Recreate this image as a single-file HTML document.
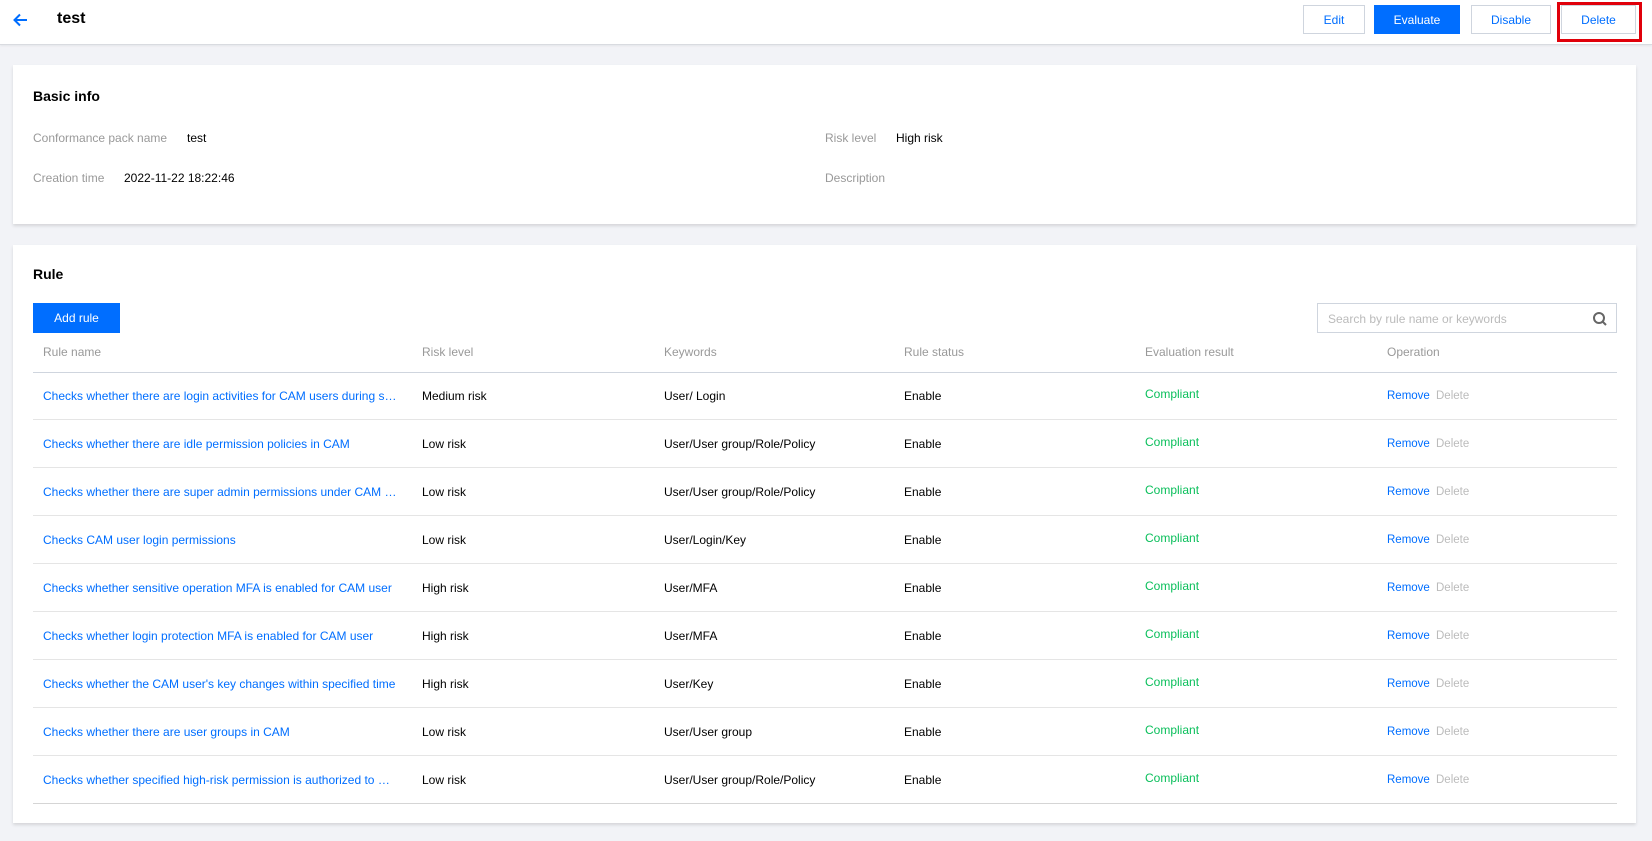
<!DOCTYPE html>
<html><head><meta charset="utf-8"><style>
*{box-sizing:border-box;margin:0;padding:0}
body{width:1652px;height:841px;background:#f2f3f7;font-family:"Liberation Sans",Arial,sans-serif;font-size:12px;color:#000;position:relative;overflow:hidden}
.hdr{position:absolute;left:0;top:0;width:1652px;height:45px;background:#fff;border-bottom:1px solid #d9dbe0;box-shadow:0 1px 2px rgba(0,0,0,.06)}
.abs{position:absolute}
.btn{position:absolute;top:5px;height:29px;border:1px solid #cfd5de;background:#fff;color:#006eff;font-size:12px;display:flex;align-items:center;justify-content:center}
.card{position:absolute;left:13px;width:1623px;background:#fff;box-shadow:0 2px 3px rgba(0,0,0,.12)}
.lbl{color:#999}
.row{position:absolute;left:33px;width:1584px;border-bottom:1px solid #e5e5e5;height:48px}
.row span{position:absolute;top:17px;white-space:nowrap}
.row span.blue:first-child{max-width:355px;overflow:hidden;text-overflow:ellipsis}
.blue{color:#006eff}.green{color:#0abf5b}.gray{color:#bbb}
.op{font-size:11.5px}
</style></head><body>
<div class="hdr">
<svg class="abs" style="left:12px;top:11px" width="18" height="18" viewBox="0 0 18 18"><path d="M15 9H3M8 3.5L2.5 9 8 14.5" fill="none" stroke="#006eff" stroke-width="2"/></svg>
<div class="abs" style="left:57px;top:10px;font-size:16px;font-weight:bold">test</div>
<div class="btn" style="left:1303px;width:62px">Edit</div>
<div class="btn" style="left:1374px;width:86px;background:#006eff;border-color:#006eff;color:#fff">Evaluate</div>
<div class="btn" style="left:1471px;width:80px">Disable</div>
<div class="btn" style="left:1561px;width:75px">Delete</div>
<div class="abs" style="left:1557px;top:2px;width:85px;height:40px;border:3px solid #e0000a"></div>
</div>

<div class="card" style="top:65px;height:159px">
<div class="abs" style="left:20px;top:23px;font-size:14px;font-weight:bold">Basic info</div>
<div class="abs lbl" style="left:20px;top:66px">Conformance pack name</div>
<div class="abs" style="left:174px;top:66px">test</div>
<div class="abs lbl" style="left:812px;top:66px">Risk level</div>
<div class="abs" style="left:883px;top:66px">High risk</div>
<div class="abs lbl" style="left:20px;top:106px">Creation time</div>
<div class="abs" style="left:111px;top:106px">2022-11-22 18:22:46</div>
<div class="abs lbl" style="left:812px;top:106px">Description</div>
</div>

<div class="card" style="top:245px;height:578px"></div>
<div class="abs" style="left:33px;top:266px;font-size:14px;font-weight:bold">Rule</div>
<div class="abs" style="left:33px;top:303px;width:87px;height:30px;background:#006eff;color:#fff;display:flex;align-items:center;justify-content:center;font-size:12px">Add rule</div>
<div class="abs" style="left:1317px;top:303px;width:300px;height:30px;border:1px solid #cfd5de"><span class="abs" style="left:10px;top:8px;color:#bbb;font-size:12px">Search by rule name or keywords</span>
<svg class="abs" style="left:274px;top:7px" width="16" height="16" viewBox="0 0 16 16"><circle cx="7" cy="7" r="5" fill="none" stroke="#666" stroke-width="2"/><path d="M10.5 10.5L14 14" stroke="#666" stroke-width="2"/></svg></div>

<div class="row" style="top:325px;border-bottom-color:#cfd5de">
<span class="lbl" style="left:10px;top:20px">Rule name</span><span class="lbl" style="left:389px;top:20px">Risk level</span><span class="lbl" style="left:631px;top:20px">Keywords</span><span class="lbl" style="left:871px;top:20px">Rule status</span><span class="lbl" style="left:1112px;top:20px">Evaluation result</span><span class="lbl" style="left:1354px;top:20px">Operation</span>
</div>

<div class="row" style="top:372px"><span class="blue" style="left:10px">Checks whether there are login activities for CAM users during specified time</span><span style="left:389px">Medium risk</span><span style="left:631px">User/ Login</span><span style="left:871px">Enable</span><span class="green" style="left:1112px;top:15px">Compliant</span><span class="blue op" style="left:1354px;top:18px">Remove</span><span class="gray op" style="left:1403px;top:18px">Delete</span></div>
<div class="row" style="top:420px"><span class="blue" style="left:10px">Checks whether there are idle permission policies in CAM</span><span style="left:389px">Low risk</span><span style="left:631px">User/User group/Role/Policy</span><span style="left:871px">Enable</span><span class="green" style="left:1112px;top:15px">Compliant</span><span class="blue op" style="left:1354px;top:18px">Remove</span><span class="gray op" style="left:1403px;top:18px">Delete</span></div>
<div class="row" style="top:468px"><span class="blue" style="left:10px">Checks whether there are super admin permissions under CAM sub-accounts</span><span style="left:389px">Low risk</span><span style="left:631px">User/User group/Role/Policy</span><span style="left:871px">Enable</span><span class="green" style="left:1112px;top:15px">Compliant</span><span class="blue op" style="left:1354px;top:18px">Remove</span><span class="gray op" style="left:1403px;top:18px">Delete</span></div>
<div class="row" style="top:516px"><span class="blue" style="left:10px">Checks CAM user login permissions</span><span style="left:389px">Low risk</span><span style="left:631px">User/Login/Key</span><span style="left:871px">Enable</span><span class="green" style="left:1112px;top:15px">Compliant</span><span class="blue op" style="left:1354px;top:18px">Remove</span><span class="gray op" style="left:1403px;top:18px">Delete</span></div>
<div class="row" style="top:564px"><span class="blue" style="left:10px">Checks whether sensitive operation MFA is enabled for CAM user</span><span style="left:389px">High risk</span><span style="left:631px">User/MFA</span><span style="left:871px">Enable</span><span class="green" style="left:1112px;top:15px">Compliant</span><span class="blue op" style="left:1354px;top:18px">Remove</span><span class="gray op" style="left:1403px;top:18px">Delete</span></div>
<div class="row" style="top:612px"><span class="blue" style="left:10px">Checks whether login protection MFA is enabled for CAM user</span><span style="left:389px">High risk</span><span style="left:631px">User/MFA</span><span style="left:871px">Enable</span><span class="green" style="left:1112px;top:15px">Compliant</span><span class="blue op" style="left:1354px;top:18px">Remove</span><span class="gray op" style="left:1403px;top:18px">Delete</span></div>
<div class="row" style="top:660px"><span class="blue" style="left:10px">Checks whether the CAM user's key changes within specified time</span><span style="left:389px">High risk</span><span style="left:631px">User/Key</span><span style="left:871px">Enable</span><span class="green" style="left:1112px;top:15px">Compliant</span><span class="blue op" style="left:1354px;top:18px">Remove</span><span class="gray op" style="left:1403px;top:18px">Delete</span></div>
<div class="row" style="top:708px"><span class="blue" style="left:10px">Checks whether there are user groups in CAM</span><span style="left:389px">Low risk</span><span style="left:631px">User/User group</span><span style="left:871px">Enable</span><span class="green" style="left:1112px;top:15px">Compliant</span><span class="blue op" style="left:1354px;top:18px">Remove</span><span class="gray op" style="left:1403px;top:18px">Delete</span></div>
<div class="row" style="top:756px;border-bottom-color:#d5d5d5"><span class="blue" style="left:10px">Checks whether specified high-risk permission is authorized to CAM user</span><span style="left:389px">Low risk</span><span style="left:631px">User/User group/Role/Policy</span><span style="left:871px">Enable</span><span class="green" style="left:1112px;top:15px">Compliant</span><span class="blue op" style="left:1354px;top:18px">Remove</span><span class="gray op" style="left:1403px;top:18px">Delete</span></div>
</body></html>
